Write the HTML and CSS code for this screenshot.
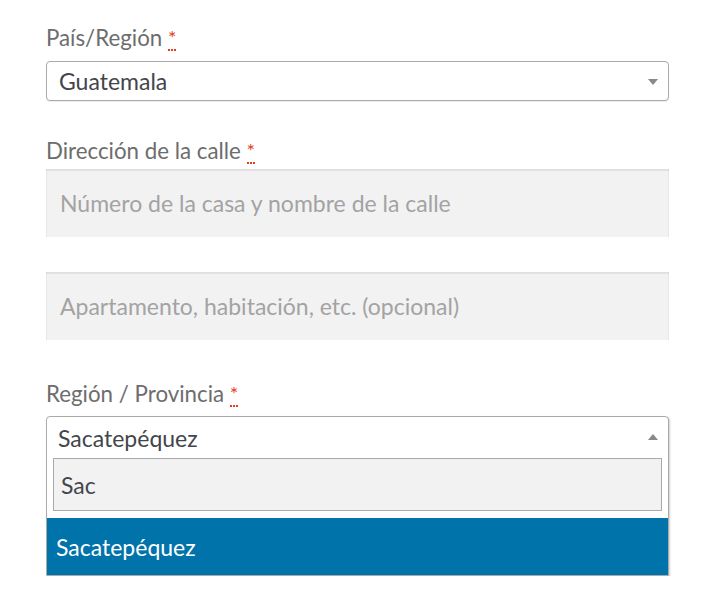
FILE: index.html
```html
<!DOCTYPE html>
<html lang="es">
<head>
<meta charset="utf-8">
<title>Dirección</title>
<link rel="stylesheet" href="styles.css">
</head>
<body>
<form class="form">
  <div class="row">
    <label class="label">País/Región <abbr class="req" title="obligatorio">*</abbr></label>
    <div class="select">
      <span class="select-text">Guatemala</span>
      <span class="arrow-down"></span>
    </div>
  </div>
  <div class="row row-addr">
    <label class="label">Dirección de la calle <abbr class="req" title="obligatorio">*</abbr></label>
    <div class="input"><span class="placeholder">Número de la casa y nombre de la calle</span></div>
    <div class="input input-second"><span class="placeholder">Apartamento, habitación, etc. (opcional)</span></div>
  </div>
  <div class="row row-region">
    <label class="label">Región / Provincia <abbr class="req" title="obligatorio">*</abbr></label>
    <div class="combo">
      <div class="combo-head">
        <span class="select-text">Sacatepéquez</span>
        <span class="arrow-up"></span>
      </div>
      <div class="combo-search"><span class="search-text">Sac</span></div>
      <div class="combo-option">Sacatepéquez</div>
    </div>
  </div>
</form>
</body>
</html>
```

FILE: styles.css
```css
* { box-sizing: border-box; }
html, body { margin: 0; padding: 0; background: #ffffff; }
body {
  font-family: Lato, "Noto Sans", "Liberation Sans", sans-serif;
  font-size: 23px;
  color: #6d6d6d;
}
.form {
  width: 623px;
  margin-left: 46px;
  padding-top: 24px;
}
.row { display: flex; flex-direction: column; }
.label {
  display: block;
  font-size: 22.3px;
  line-height: 27px;
  height: 27px;
  color: #6d6d6d;
}
.req {
  color: #e2401c;
  text-decoration: none;
  border-bottom: 2px dotted #e2401c;
  font-size: 20px;
  line-height: 1;
  vertical-align: 1px;
}
.row .label { margin-bottom: 10px; }
.select {
  height: 40px;
  border: 1px solid #aaaaaa;
  border-radius: 4px;
  display: flex;
  align-items: center;
  justify-content: space-between;
  padding: 0 10px 0 12px;
  background: #fff;
  box-shadow: 0 1px 1px rgba(0,0,0,0.08);
}
.select-text { color: #43454b; }
.arrow-down, .arrow-up {
  width: 0; height: 0;
  border-left: 5px solid transparent;
  border-right: 5px solid transparent;
}
.arrow-down { border-top: 6px solid #888; margin-top: 2px; }
.arrow-up { border-bottom: 6px solid #888; margin-top: -2px; }
.row-addr { margin-top: 36px; }
.row-addr .label { margin-bottom: 5px; }
.input {
  height: 68px;
  background: #f2f2f2;
  box-shadow: inset 0 2px 1px rgba(0,0,0,0.07), inset 1px 0 0 rgba(0,0,0,0.04), inset -1px 0 0 rgba(0,0,0,0.04);
  display: flex;
  align-items: center;
  padding: 0 14px;
}
.input-second { margin-top: 35px; }
.placeholder { color: #a3a3a3; }
.row-region { margin-top: 40px; }
.row-region .label { margin-bottom: 9px; }
.combo {
  border: 1px solid #aaaaaa;
  border-radius: 4px 4px 0 0;
  background: #fff;
  box-shadow: 1px 1px 2px rgba(0,0,0,0.2);
}
.combo-head {
  height: 41px;
  display: flex;
  align-items: center;
  justify-content: space-between;
  padding: 0 10px 0 11px;
}
.combo-search {
  margin: 0 6px;
  height: 53px;
  border: 1px solid #aaaaaa;
  background: #f2f2f2;
  display: flex;
  align-items: center;
  padding: 0 7px;
}
.search-text { color: #43454b; }
.combo-option {
  margin-top: 7px;
  height: 57px;
  background: #0073aa;
  color: #ffffff;
  display: flex;
  align-items: center;
  padding: 0 9px;
}
```
